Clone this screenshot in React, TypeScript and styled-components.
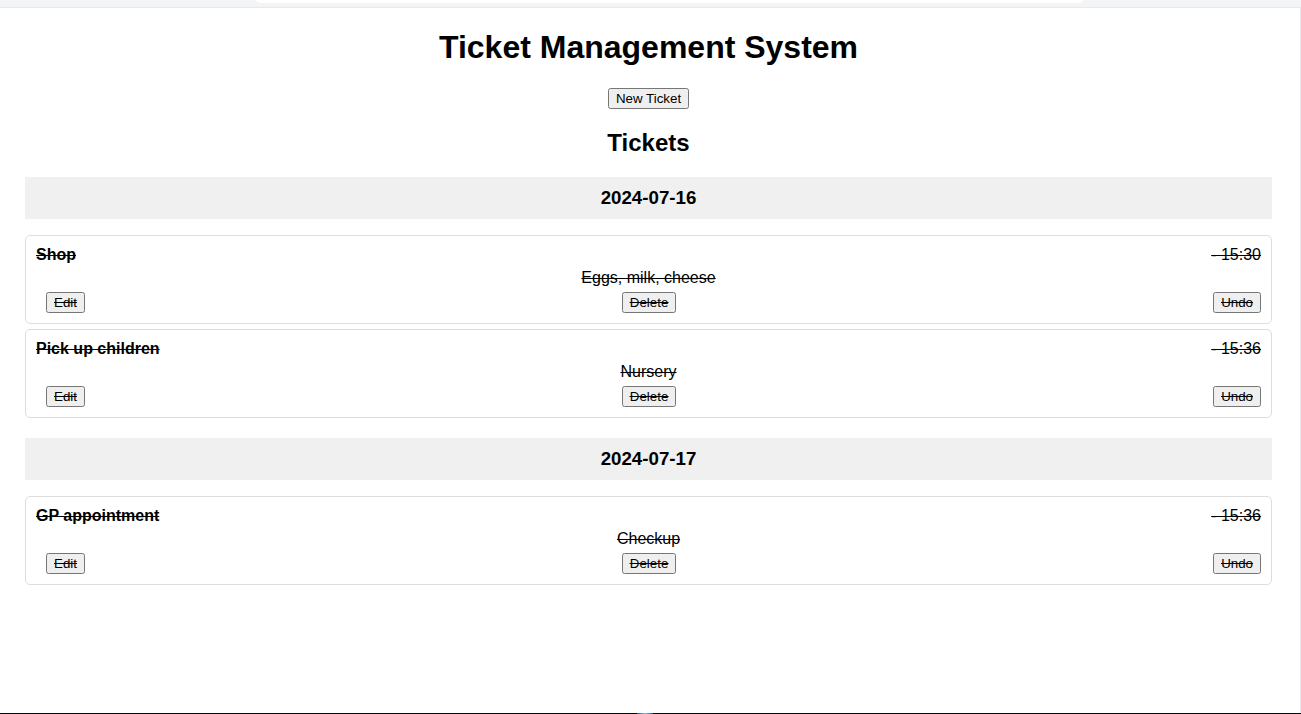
import React from "react";
import styled, { createGlobalStyle } from "styled-components";

const GlobalStyle = createGlobalStyle`
  *, *::before, *::after {
    box-sizing: border-box;
  }
  body {
    margin: 0;
    background: #ffffff;
    color: #000000;
    font-family: "Liberation Sans", Arial, sans-serif;
    font-size: 16px;
    line-height: 18px;
  }
`;

const Window = styled.div`
  display: flex;
  flex-direction: column;
  min-height: 100vh;
`;

const BrowserBar = styled.div`
  display: flex;
  height: 8px;
  padding: 0 218px 0 256px;
  background: #f3f4f6;
  border-bottom: 1px solid #e9e9ec;
`;

const AddressField = styled.div`
  flex: 1;
  height: 3px;
  background: #ffffff;
  border-radius: 0 0 6px 6px / 0 0 3px 3px;
`;

const Page = styled.main`
  flex: 1;
  display: flex;
  flex-direction: column;
  padding: 21px 28px 20px 25px;
  border-right: 1px solid #ebebee;
  text-align: center;
`;

const Taskbar = styled.footer`
  display: flex;
  justify-content: center;
  height: 1px;
  background: #08070c;
`;

const TaskbarIcon = styled.span`
  width: 16px;
  margin-right: 12px;
  background: linear-gradient(90deg, #1b4f7c, #8fb4d0, #1b4f7c);
`;

const Title = styled.h1`
  margin: 0 0 22px;
  font-size: 32px;
  line-height: 37px;
`;

const Subtitle = styled.h2`
  margin: 20px 0 21px;
  font-size: 24px;
  line-height: 27px;
`;

const Button = styled.button<{ $struck?: boolean }>`
  height: 21px;
  font-family: inherit;
  text-decoration: ${(p) => (p.$struck ? "line-through" : "none")};
`;

const Day = styled.section`
  margin-bottom: 20px;
`;

const DayHeading = styled.h3`
  margin: 0 0 16px;
  padding: 10px;
  background: #f0f0f0;
  line-height: 22px;
`;

const TicketList = styled.ul`
  display: flex;
  flex-direction: column;
  gap: 5px;
  margin: 0;
  padding: 0;
  list-style: none;
`;

const TicketCard = styled.li<{ $done: boolean }>`
  display: flex;
  flex-direction: column;
  gap: 5px;
  padding: 10px;
  border: 1px solid #dddddd;
  border-radius: 5px;
  text-decoration: ${(p) => (p.$done ? "line-through" : "none")};
`;

const TicketHeader = styled.div`
  display: flex;
  justify-content: space-between;
`;

const Description = styled.div``;

const Actions = styled.div`
  display: flex;
  justify-content: space-between;

  ${Button} {
    margin: 0 0 0 10px;
  }
`;

interface Ticket {
  title: string;
  time: string;
  description: string;
  done: boolean;
}

const days: { date: string; tickets: Ticket[] }[] = [
  {
    date: "2024-07-16",
    tickets: [
      { title: "Shop", time: "15:30", description: "Eggs, milk, cheese", done: true },
      { title: "Pick up children", time: "15:36", description: "Nursery", done: true },
    ],
  },
  {
    date: "2024-07-17",
    tickets: [{ title: "GP appointment", time: "15:36", description: "Checkup", done: true }],
  },
];

function TicketItem({ ticket }: { ticket: Ticket }) {
  return (
    <TicketCard $done={ticket.done}>
      <TicketHeader>
        <strong>{ticket.title}</strong>
        <span>- {ticket.time}</span>
      </TicketHeader>
      <Description>{ticket.description}</Description>
      <Actions>
        <Button type="button" $struck={ticket.done}>Edit</Button>
        <Button type="button" $struck={ticket.done}>Delete</Button>
        <Button type="button" $struck={ticket.done}>{ticket.done ? "Undo" : "Done"}</Button>
      </Actions>
    </TicketCard>
  );
}

export default function App() {
  return (
    <Window>
      <GlobalStyle />
      <BrowserBar>
        <AddressField />
      </BrowserBar>
      <Page>
        <Title>Ticket Management System</Title>
        <div>
          <Button type="button">New Ticket</Button>
        </div>
        <Subtitle>Tickets</Subtitle>
        {days.map((day) => (
          <Day key={day.date}>
            <DayHeading>{day.date}</DayHeading>
            <TicketList>
              {day.tickets.map((ticket) => (
                <TicketItem key={ticket.title} ticket={ticket} />
              ))}
            </TicketList>
          </Day>
        ))}
      </Page>
      <Taskbar>
        <TaskbarIcon />
      </Taskbar>
    </Window>
  );
}
